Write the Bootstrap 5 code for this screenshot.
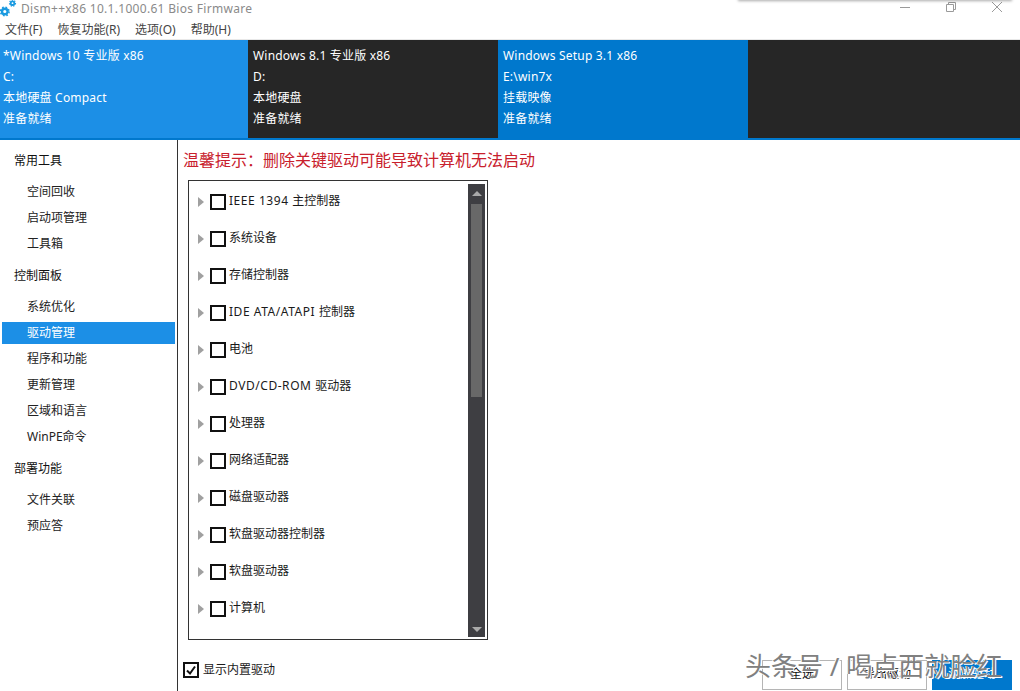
<!DOCTYPE html>
<html lang="zh-CN">
<head>
<meta charset="utf-8">
<title>Dism++</title>
<link href="https://cdn.jsdelivr.net/npm/bootstrap@5.3.0/dist/css/bootstrap.min.css" rel="stylesheet">
<style>
html,body{height:100%;margin:0;overflow:hidden}
body{width:1020px;height:691px;position:relative;background:#fff;font:12px/16px "Noto Sans","Noto Sans CJK SC",sans-serif;color:#1a1a1a}
.titlebar{height:20px}
.titlebar .ttl{margin-left:1px;margin-bottom:2px;color:#8a8a8a;font-size:12px;letter-spacing:.3px}
.winbtn{width:46px;height:14px;display:flex;align-items:center;justify-content:center}
.topshade{position:absolute;left:738px;top:-3px;width:274px;height:3px;box-shadow:0 1px 3px rgba(0,0,0,.35)}
.menubar{height:20px;padding-left:5px;gap:15px;color:#444}
.strip{height:100px;background:#262626;border-bottom:2px solid #0078cd;box-shadow:0 -1px 0 #e8e8e8}
.ostab{width:250px;height:98px;color:#fff;padding:5px 5px 0;line-height:21px;font-size:12px;letter-spacing:.2px}
.ostab.cur{background:#1c8fe6;width:248px;padding-left:3px}
.ostab.blue{background:#0078cd}
.main{height:551px}
.side{width:178px;border-right:1px solid #333;padding:10px 2px 0;flex:none}
.grp{height:22px;line-height:22px;padding-left:12px;margin-bottom:9px;color:#111}
.itm{height:22px;line-height:22px;padding-left:25px;margin-bottom:4px;width:173px;color:#222}
.itm.on{background:#1c8fe6;color:#fff}
.gap{height:6px}
.warn{color:#c8202c;font-size:16px;line-height:20px;margin:0;padding:10px 0 0 5px;height:40px}
.content{position:relative;flex:1;min-width:0}
.tree{margin-left:10px;width:300px;height:460px;border:1px solid #333;padding:1px 2px 1px 0}
.rows{padding-top:1px}
.trow{height:37px;padding-left:9px}
.tri{width:0;height:0;border-left:6px solid #a0a0a0;border-top:5px solid transparent;border-bottom:5px solid transparent;margin-right:6px}
.cb{width:16px;height:16px;border:2px solid #111;background:#fff;margin-right:3px;flex:none}
.lbl{margin-bottom:2px}
.lat{letter-spacing:.55px}
.sb{width:17px;background:#3e3e42;height:453px;padding-top:20px;margin-top:2px}
.thumb{width:11px;height:193px;margin:0 auto;background:#686868}
.sbtn{position:absolute;left:4px;width:0;height:0;border-left:5px solid transparent;border-right:5px solid transparent}
.sbtn.up{top:7px;border-bottom:5px solid #a9a9a9}
.sbtn.dn{bottom:5px;border-top:5px solid #a9a9a9}
.foot{height:50px;padding-top:20px}
.chk{margin-left:5px;height:20px}
.cb2{width:16px;height:16px;border:2px solid #111;margin-right:4px;display:flex}
.acts{margin-left:auto;padding-right:8px;gap:5px}
.actb{width:80px;height:30px;border:1px solid #b5b5b5;border-radius:0;font-size:12px;padding:0 0 3px;background:#fff;color:#111;line-height:24px}
.actb.pri{background:#0078cd;border-color:#0078cd;color:#fff}
.wm{position:absolute;left:745px;top:651px;font-size:26px;line-height:30px;color:#808080;text-shadow:1px 1px 0 #fff,-1px 0 0 #fff;white-space:nowrap}
</style>
</head>
<body>
<div class="topshade"></div>
<div class="titlebar d-flex align-items-center">
  <svg width="20" height="19" viewBox="0 0 20 19" class="align-self-start"><circle cx="4.800" cy="11.500" r="2.800" fill="none" stroke="#1a9ae0" stroke-width="2.400"/><circle cx="4.800" cy="11.500" r="4.300" fill="none" stroke="#1a9ae0" stroke-width="1.500" stroke-dasharray="1.700 1.700"/><circle cx="12.500" cy="3.200" r="1.800" fill="none" stroke="#1a9ae0" stroke-width="1.800"/><circle cx="12.500" cy="3.200" r="3" fill="none" stroke="#1a9ae0" stroke-width="1.200" stroke-dasharray="1.300 1.300"/></svg>
  <span class="ttl">Dism++x86 10.1.1000.61 Bios Firmware</span>
  <div class="d-flex ms-auto align-self-start">
    <div class="winbtn"><svg width="12" height="12" viewBox="0 0 12 12"><path d="M1 6.500h10" stroke="#9a9a9a"/></svg></div>
    <div class="winbtn"><svg width="12" height="12" viewBox="0 0 12 12"><path d="M1.500 3.500h7v7h-7zM3.500 3.500v-2h7v7h-2" fill="none" stroke="#9a9a9a"/></svg></div>
    <div class="winbtn"><svg width="12" height="12" viewBox="0 0 12 12"><path d="M1 1l10 10M11 1L1 11" stroke="#9a9a9a"/></svg></div>
  </div>
</div>
<div class="menubar d-flex align-items-center"><span>文件(F)</span><span>恢复功能(R)</span><span>选项(O)</span><span>帮助(H)</span></div>
<div class="strip d-flex">
  <div class="ostab cur">*Windows 10 专业版 x86<br>C:<br>本地硬盘 Compact<br>准备就绪</div>
  <div class="ostab">Windows 8.1 专业版 x86<br>D:<br>本地硬盘<br>准备就绪</div>
  <div class="ostab blue">Windows Setup 3.1 x86<br>E:\win7x<br>挂载映像<br>准备就绪</div>
</div>
<div class="main d-flex">
  <div class="side">
    <div class="grp">常用工具</div>
    <div class="itm">空间回收</div><div class="itm">启动项管理</div><div class="itm">工具箱</div>
    <div class="gap"></div>
    <div class="grp">控制面板</div>
    <div class="itm">系统优化</div><div class="itm on">驱动管理</div><div class="itm">程序和功能</div><div class="itm">更新管理</div><div class="itm">区域和语言</div><div class="itm">WinPE命令</div>
    <div class="gap"></div>
    <div class="grp">部署功能</div>
    <div class="itm">文件关联</div><div class="itm">预应答</div>
  </div>
  <div class="content">
    <p class="warn">温馨提示：删除关键驱动可能导致计算机无法启动</p>
    <div class="tree d-flex justify-content-between">
      <div class="rows flex-grow-1">
        <div class="trow d-flex align-items-center"><i class="tri"></i><i class="cb"></i><span class="lbl"><span class="lat">IEEE 1394 </span>主控制器</span></div>
        <div class="trow d-flex align-items-center"><i class="tri"></i><i class="cb"></i><span class="lbl">系统设备</span></div>
        <div class="trow d-flex align-items-center"><i class="tri"></i><i class="cb"></i><span class="lbl">存储控制器</span></div>
        <div class="trow d-flex align-items-center"><i class="tri"></i><i class="cb"></i><span class="lbl"><span class="lat">IDE ATA/ATAPI </span>控制器</span></div>
        <div class="trow d-flex align-items-center"><i class="tri"></i><i class="cb"></i><span class="lbl">电池</span></div>
        <div class="trow d-flex align-items-center"><i class="tri"></i><i class="cb"></i><span class="lbl"><span class="lat">DVD/CD-ROM </span>驱动器</span></div>
        <div class="trow d-flex align-items-center"><i class="tri"></i><i class="cb"></i><span class="lbl">处理器</span></div>
        <div class="trow d-flex align-items-center"><i class="tri"></i><i class="cb"></i><span class="lbl">网络适配器</span></div>
        <div class="trow d-flex align-items-center"><i class="tri"></i><i class="cb"></i><span class="lbl">磁盘驱动器</span></div>
        <div class="trow d-flex align-items-center"><i class="tri"></i><i class="cb"></i><span class="lbl">软盘驱动器控制器</span></div>
        <div class="trow d-flex align-items-center"><i class="tri"></i><i class="cb"></i><span class="lbl">软盘驱动器</span></div>
        <div class="trow d-flex align-items-center"><i class="tri"></i><i class="cb"></i><span class="lbl">计算机</span></div>
      </div>
      <div class="sb position-relative"><i class="sbtn up"></i><div class="thumb"></div><i class="sbtn dn"></i></div>
    </div>
    <div class="foot d-flex">
      <div class="chk d-flex align-items-center"><span class="cb2"><svg width="12" height="12" viewBox="0 0 12 12"><path d="M2 6.500l3 3 5-7" fill="none" stroke="#111" stroke-width="2"/></svg></span>显示内置驱动</div>
      <div class="acts d-flex">
        <button class="btn actb">全选</button>
        <button class="btn actb">导出驱动</button>
        <button class="btn actb pri">添加驱动</button>
      </div>
    </div>
  </div>
</div>
<div class="wm">头条号 / 喝点西就脸红</div>
<script src="https://cdn.jsdelivr.net/npm/bootstrap@5.3.0/dist/js/bootstrap.bundle.min.js"></script>
</body>
</html>
